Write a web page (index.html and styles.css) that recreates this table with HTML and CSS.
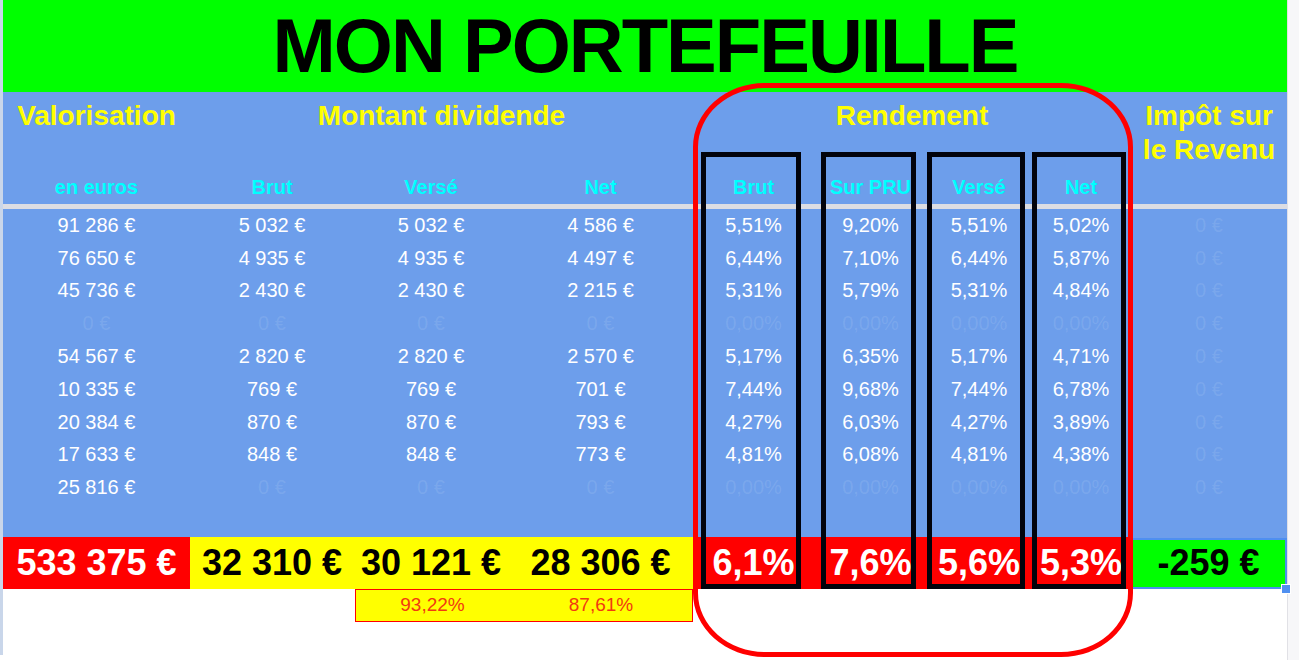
FILE: index.html
```html
<!DOCTYPE html>
<html lang="fr">
<head>
<meta charset="utf-8">
<title>Mon portefeuille</title>
<link rel="stylesheet" href="styles.css">
</head>
<body>
<div class="page">
  <div class="gutter-left"></div>
  <div class="sheet">
    <div class="title">MON PORTEFEUILLE</div>
    <div class="heads">
      <div class="h1 c1">Valorisation</div>
      <div class="h1 span3">Montant dividende</div>
      <div class="h1 span4">Rendement</div>
      <div class="h1 c9 tall">Impôt sur<br>le Revenu</div>
      <div class="h2">en euros</div>
      <div class="h2">Brut</div>
      <div class="h2">Versé</div>
      <div class="h2">Net</div>
      <div class="h2">Brut</div>
      <div class="h2">Sur PRU</div>
      <div class="h2">Versé</div>
      <div class="h2">Net</div>
      <div class="h2"></div>
    </div>
    <div class="sep"></div>
    <div class="rows">
      <div class="row"><span>91 286 €</span><span>5 032 €</span><span>5 032 €</span><span>4 586 €</span><span>5,51%</span><span>9,20%</span><span>5,51%</span><span>5,02%</span><span class="z">0 €</span></div>
      <div class="row"><span>76 650 €</span><span>4 935 €</span><span>4 935 €</span><span>4 497 €</span><span>6,44%</span><span>7,10%</span><span>6,44%</span><span>5,87%</span><span class="z">0 €</span></div>
      <div class="row"><span>45 736 €</span><span>2 430 €</span><span>2 430 €</span><span>2 215 €</span><span>5,31%</span><span>5,79%</span><span>5,31%</span><span>4,84%</span><span class="z">0 €</span></div>
      <div class="row"><span class="z">0 €</span><span class="z">0 €</span><span class="z">0 €</span><span class="z">0 €</span><span class="z">0,00%</span><span class="z">0,00%</span><span class="z">0,00%</span><span class="z">0,00%</span><span class="z">0 €</span></div>
      <div class="row"><span>54 567 €</span><span>2 820 €</span><span>2 820 €</span><span>2 570 €</span><span>5,17%</span><span>6,35%</span><span>5,17%</span><span>4,71%</span><span class="z">0 €</span></div>
      <div class="row"><span>10 335 €</span><span>769 €</span><span>769 €</span><span>701 €</span><span>7,44%</span><span>9,68%</span><span>7,44%</span><span>6,78%</span><span class="z">0 €</span></div>
      <div class="row"><span>20 384 €</span><span>870 €</span><span>870 €</span><span>793 €</span><span>4,27%</span><span>6,03%</span><span>4,27%</span><span>3,89%</span><span class="z">0 €</span></div>
      <div class="row"><span>17 633 €</span><span>848 €</span><span>848 €</span><span>773 €</span><span>4,81%</span><span>6,08%</span><span>4,81%</span><span>4,38%</span><span class="z">0 €</span></div>
      <div class="row"><span>25 816 €</span><span class="z">0 €</span><span class="z">0 €</span><span class="z">0 €</span><span class="z">0,00%</span><span class="z">0,00%</span><span class="z">0,00%</span><span class="z">0,00%</span><span class="z">0 €</span></div>
      <div class="row"></div>
    </div>
    <div class="totals">
      <div class="t red">533 375 €</div>
      <div class="t yellow">32 310 €</div>
      <div class="t yellow">30 121 €</div>
      <div class="t yellow">28 306 €</div>
      <div class="t red">6,1%</div>
      <div class="t red">7,6%</div>
      <div class="t red">5,6%</div>
      <div class="t red">5,3%</div>
      <div class="t green">-259 €<span class="handle"></span></div>
    </div>
    <div class="under">
      <div class="subbox"><span>93,22%</span><span>87,61%</span></div>
    </div>

    <div class="ring"></div>
    <div class="box b1"></div>
    <div class="box b2"></div>
    <div class="box b3"></div>
    <div class="box b4"></div>
  </div>
  <div class="gutter-right"></div>
</div>
</body>
</html>
```

FILE: styles.css
```css
html, body {
  margin: 0;
  padding: 0;
  background: #ffffff;
  overflow: hidden;
}

body {
  font-family: "Liberation Sans", Arial, sans-serif;
  --cols: 187px 164px 154px 185px 121px 113px 104px 100px 156px;
}

.page {
  display: flex;
  width: 1299px;
  height: 660px;
}

.gutter-left {
  width: 3px;
  height: 655px;
  background: #c9d6ea;
}

.gutter-right {
  flex: 1;
  background: #f7f7f9;
  border-left: 1px solid #e1e1e6;
}

.sheet {
  position: relative;
  width: 1284px;
  display: flex;
  flex-direction: column;
}

.title {
  height: 92px;
  background: #00ff00;
  color: #000;
  font-weight: bold;
  font-size: 76px;
  line-height: 92px;
  letter-spacing: -2px;
  text-align: center;
}

.heads {
  display: grid;
  grid-template-columns: var(--cols);
  grid-template-rows: 1fr auto;
  height: 112px;
  box-sizing: border-box;
  padding: 7px 0 5px;
  background: #6d9eeb;
}

.h1 {
  color: #ffff00;
  font-weight: bold;
  font-size: 28px;
  line-height: 34px;
  text-align: center;
  white-space: nowrap;
}

.span3 { grid-column: span 3; }
.span4 { grid-column: span 4; }
.c9 { line-height: 34px; }

.h2 {
  color: #00ffff;
  font-weight: bold;
  font-size: 20px;
  line-height: 24px;
  text-align: center;
  white-space: nowrap;
}

.sep {
  height: 5px;
  background: #dcdde3;
}

.rows {
  background: #6d9eeb;
}

.row {
  display: grid;
  grid-template-columns: var(--cols);
  height: 32.8px;
  align-items: center;
}

.row span {
  color: #ffffff;
  font-size: 20px;
  text-align: center;
  white-space: nowrap;
}

.row span.z {
  color: rgba(255, 255, 255, 0.1);
}

.totals {
  display: grid;
  grid-template-columns: var(--cols);
  height: 52px;
  background: #6d9eeb;
}

.t {
  display: flex;
  align-items: center;
  justify-content: center;
  font-weight: bold;
  font-size: 36px;
  white-space: nowrap;
}

.t.red { background: #ff0000; color: #ffffff; }
.t.yellow { background: #ffff00; color: #000000; }
.t.green {
  position: relative;
  background: #00ff00;
  color: #000000;
  margin: 1px 0 0 1px;
  border: 2px solid #4f8ff0;
  border-left: none;
}

.handle {
  position: absolute;
  right: -6px;
  bottom: -7px;
  width: 8px;
  height: 8px;
  background: #4f8ff0;
  border: 1px solid #ffffff;
}

.under {
  display: grid;
  grid-template-columns: var(--cols);
  height: 33px;
}

.subbox {
  grid-column: 3 / span 2;
  display: grid;
  grid-template-columns: 153px 184px;
  align-items: center;
  background: #ffff00;
  border: 1px solid #ff0000;
  margin-left: 1px;
}

.subbox span {
  color: #f23a10;
  font-size: 19px;
  text-align: center;
}

.ring {
  position: absolute;
  left: 690px;
  top: 83px;
  width: 440px;
  height: 574px;
  box-sizing: border-box;
  border: 5px solid #ff0000;
  border-radius: 72px / 64px;
}

.box {
  position: absolute;
  top: 152px;
  height: 437px;
  box-sizing: border-box;
  border: 5px solid #02030c;
}

.b1 { left: 698px; width: 100px; }
.b2 { left: 818px; width: 95px; }
.b3 { left: 924px; width: 98px; }
.b4 { left: 1029px; width: 94px; }
```
